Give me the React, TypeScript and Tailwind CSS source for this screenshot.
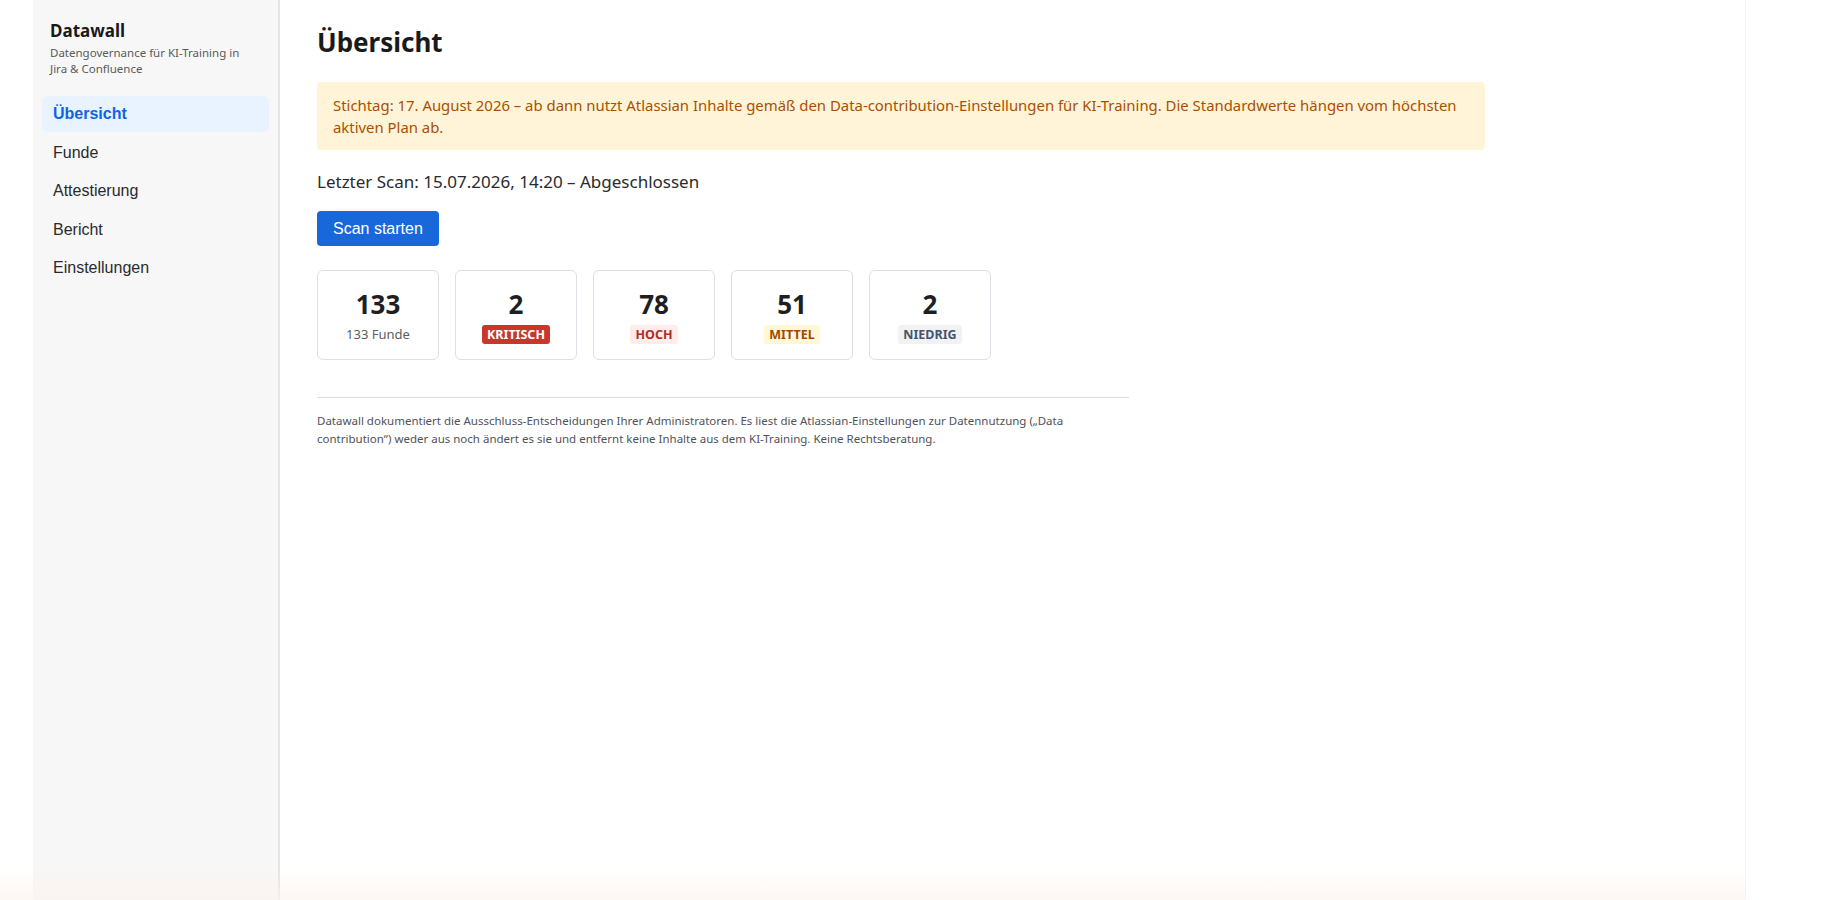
import React from "react";

const navItems = ["Übersicht", "Funde", "Attestierung", "Bericht", "Einstellungen"];

const stats = [
  { value: "133", label: "133 Funde", kind: "plain" },
  { value: "2", label: "KRITISCH", kind: "critical" },
  { value: "78", label: "HOCH", kind: "high" },
  { value: "51", label: "MITTEL", kind: "medium" },
  { value: "2", label: "NIEDRIG", kind: "low" },
];

function Badge({ label, kind }: { label: string; kind: string }) {
  if (kind === "plain") {
    return <span className="text-[13px] leading-[19px] text-[#5e5e5e]">{label}</span>;
  }
  const tone =
    kind === "critical"
      ? "bg-[#c9372c] text-white"
      : kind === "high"
      ? "bg-[#ffeceb] text-[#ae2e24]"
      : kind === "medium"
      ? "bg-[#fff7d6] text-[#a54800]"
      : "bg-[#f1f2f4] text-[#44546f]";
  return (
    <span className={`rounded-[3px] px-[5px] text-[12.5px] font-bold leading-[19px] ${tone}`}>{label}</span>
  );
}

export default function App() {
  return (
    <div className="relative flex h-[900px] w-full overflow-hidden bg-white font-['Segoe_UI','Noto_Sans',sans-serif] text-[#1f1f1f]">
      <div className="w-[33px] shrink-0" />

      {/* Sidebar */}
      <aside className="flex w-[247px] shrink-0 flex-col border-r-2 border-[#e4e4e4] bg-[#f7f7f7] pt-5">
        <div className="px-[17px]">
          <div className="text-[17px] font-bold leading-[22px] text-[#1a1a1a]">Datawall</div>
          <p className="mt-[3px] text-[11.5px] leading-[16px] text-[#5a5a5a]">
            Datengovernance für KI-Training in
            <br />
            Jira &amp; Confluence
          </p>
        </div>
        <nav className="mt-[19px] flex flex-col gap-[2.5px] px-[9px]">
          {navItems.map((item, i) => (
            <a
              key={item}
              className={`flex h-9 items-center rounded-md px-[11px] font-['Liberation_Sans',Arial,sans-serif] text-[16px] ${
                i === 0 ? "bg-[#e9f2ff] font-bold text-[#0c66e4]" : "text-[#292a2e]"
              }`}
            >
              {item}
            </a>
          ))}
        </nav>
      </aside>

      {/* Main */}
      <main className="w-[1466px] shrink-0 border-r border-[#f3f3f3] pl-[37px] pr-9 pt-6">
        <h1 className="text-[26px] font-bold leading-[36px] text-[#1a1a1a]">Übersicht</h1>

        <div className="mt-[22px] w-[1168px] rounded-[4px] bg-[#fff4d8] px-4 py-3 text-[14.9px] leading-[22px] text-[#a95000]">
          Stichtag: 17. August 2026 – ab dann nutzt Atlassian Inhalte gemäß den Data-contribution-Einstellungen für
          KI-Training. Die Standardwerte hängen vom höchsten aktiven Plan ab.
        </div>

        <p className="mt-5 text-[17px] leading-6 text-[#292a2e]">Letzter Scan: 15.07.2026, 14:20 – Abgeschlossen</p>

        <button className="mt-[17px] h-[35px] rounded-[4px] bg-[#1868db] px-4 font-['Liberation_Sans',Arial,sans-serif] text-[16px] text-white">
          Scan starten
        </button>

        <div className="mt-6 flex gap-4">
          {stats.map((s) => (
            <div
              key={s.kind}
              className="flex h-[90px] w-[122px] flex-col items-center justify-center gap-[6px] rounded-md border border-[#dcdfe4] bg-white pt-[2px]"
            >
              <span className="text-[26px] font-bold leading-[30px] text-[#1f1f1f]">{s.value}</span>
              <Badge label={s.label} kind={s.kind} />
            </div>
          ))}
        </div>

        <div className="mt-[37px] w-[812px] border-t border-[#dddee1] pt-[14px]">
          <p className="text-[11.5px] leading-[18px] text-[#505258]">
            Datawall dokumentiert die Ausschluss-Entscheidungen Ihrer Administratoren. Es liest die Atlassian-Einstellungen
            zur Datennutzung („Data contribution“) weder aus noch ändert es sie und entfernt keine Inhalte aus dem
            KI-Training. Keine Rechtsberatung.
          </p>
        </div>
      </main>

      <div className="pointer-events-none absolute bottom-0 left-0 h-[30px] w-[1746px] bg-gradient-to-b from-transparent to-[#fcf3ef]/70" />
    </div>
  );
}
